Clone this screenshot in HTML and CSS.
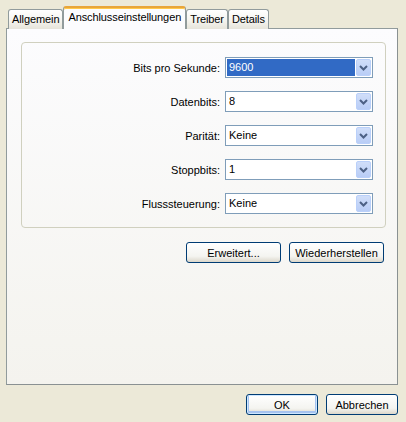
FILE: index.html
```html
<!DOCTYPE html>
<html lang="de">
  <head>
    <meta charset="UTF-8" />
    <title>Eigenschaften</title>
    <link rel="stylesheet" href="styles.css">
  </head>
  <body>
    <div class="dialog">
      <div class="tabs">
        <div class="tab">Allgemein</div>
        <div class="tab active">Anschlusseinstellungen</div>
        <div class="tab">Treiber</div>
        <div class="tab">Details</div>
      </div>

      <div class="panel">
        <div class="group">
          <div class="row">
            <label>Bits pro Sekunde:</label>
            <div class="combo focused">
              <span class="value">9600</span>
              <span class="drop"><svg width="13" height="15" viewBox="0 0 13 15"><polyline points="3,6 6.5,9.5 10,6" /></svg></span>
            </div>
          </div>
          <div class="row">
            <label>Datenbits:</label>
            <div class="combo">
              <span class="value">8</span>
              <span class="drop"><svg width="13" height="15" viewBox="0 0 13 15"><polyline points="3,6 6.5,9.5 10,6" /></svg></span>
            </div>
          </div>
          <div class="row">
            <label>Parität:</label>
            <div class="combo">
              <span class="value">Keine</span>
              <span class="drop"><svg width="13" height="15" viewBox="0 0 13 15"><polyline points="3,6 6.5,9.5 10,6" /></svg></span>
            </div>
          </div>
          <div class="row">
            <label>Stoppbits:</label>
            <div class="combo">
              <span class="value">1</span>
              <span class="drop"><svg width="13" height="15" viewBox="0 0 13 15"><polyline points="3,6 6.5,9.5 10,6" /></svg></span>
            </div>
          </div>
          <div class="row">
            <label>Flusssteuerung:</label>
            <div class="combo">
              <span class="value">Keine</span>
              <span class="drop"><svg width="13" height="15" viewBox="0 0 13 15"><polyline points="3,6 6.5,9.5 10,6" /></svg></span>
            </div>
          </div>
        </div>

        <div class="panel-buttons">
          <button class="btn wide">Erweitert...</button>
          <button class="btn wide">Wiederherstellen</button>
        </div>
      </div>

      <div class="dialog-buttons">
        <button class="btn default">OK</button>
        <button class="btn">Abbrechen</button>
      </div>
    </div>
  </body>
</html>
```

FILE: styles.css
```css
* {
  box-sizing: border-box;
}

body {
  margin: 0;
  background-color: #ece9d8;
  font-family: "Liberation Sans", Arial, sans-serif;
  font-size: 11px;
  color: #000;
}

.dialog {
  padding: 6px 8px 0 6px;
}

/* tab strip */
.tabs {
  display: flex;
  align-items: flex-end;
  height: 23px;
  padding-left: 2px;
  margin-bottom: -1px;
}

.tab {
  height: 20px;
  line-height: 18px;
  padding: 0 3px;
  border: 1px solid #919b9c;
  border-bottom: 0;
  border-radius: 3px 3px 0 0;
  background: linear-gradient(#ffffff, #f5f4ef 55%, #e6e4da);
  letter-spacing: -0.1px;
}

.tab.active {
  position: relative;
  z-index: 1;
  height: 23px;
  line-height: 18px;
  padding: 0 4px;
  border-top: 2px solid #e8a53a;
  box-shadow: inset 0 1px 0 #ffc94a;
  background: #fcfcfe;
}

/* page */
.panel {
  height: 357px;
  padding: 13px 11px 0 14px;
  border: 1px solid #919b9c;
  border-right-color: #8a9192;
  border-bottom-color: #8a9192;
  background: linear-gradient(#fcfcfe, #f4f3ee);
}

.group {
  display: flex;
  flex-direction: column;
  gap: 13px;
  padding: 14px 12px 13px 0;
  border: 1px solid #d0d0bf;
  border-radius: 4px;
}

.row {
  display: flex;
  justify-content: flex-end;
  align-items: center;
  gap: 5px;
}

.combo {
  display: flex;
  width: 148px;
  height: 21px;
  padding: 1px;
  border: 1px solid #7f9db9;
  background: #fff;
}

.combo .value {
  flex: 1;
  padding-left: 2px;
  line-height: 17px;
  margin-right: 1px;
}

.combo.focused .value {
  background: #316ac5;
  color: #fff;
}

.drop {
  width: 15px;
  height: 17px;
  border: 1px solid #bad0fa;
  border-radius: 2px;
  background: linear-gradient(#d0def9, #b9cdf6);
}

.drop svg {
  display: block;
  margin: 0 auto;
}

.drop polyline {
  fill: none;
  stroke: #4d6185;
  stroke-width: 2;
}

/* buttons */
.btn {
  height: 21px;
  padding: 0;
  border: 1px solid #003c74;
  border-radius: 3px;
  background: linear-gradient(#ffffff, #f4f4f0 70%, #dcd7cb);
  font-family: inherit;
  font-size: 11px;
  color: #000;
}

.btn.wide {
  width: 95px;
}

.btn.default {
  box-shadow: inset 0 0 0 1px #cee7ff, inset 0 -1px 0 2px #a6c3ef;
}

.panel-buttons {
  display: flex;
  justify-content: flex-end;
  gap: 8px;
  margin: 14px 2px 0 0;
}

.dialog-buttons {
  display: flex;
  justify-content: flex-end;
  gap: 8px;
  margin-top: 9px;
}

.dialog-buttons .btn {
  width: 72px;
}
```
